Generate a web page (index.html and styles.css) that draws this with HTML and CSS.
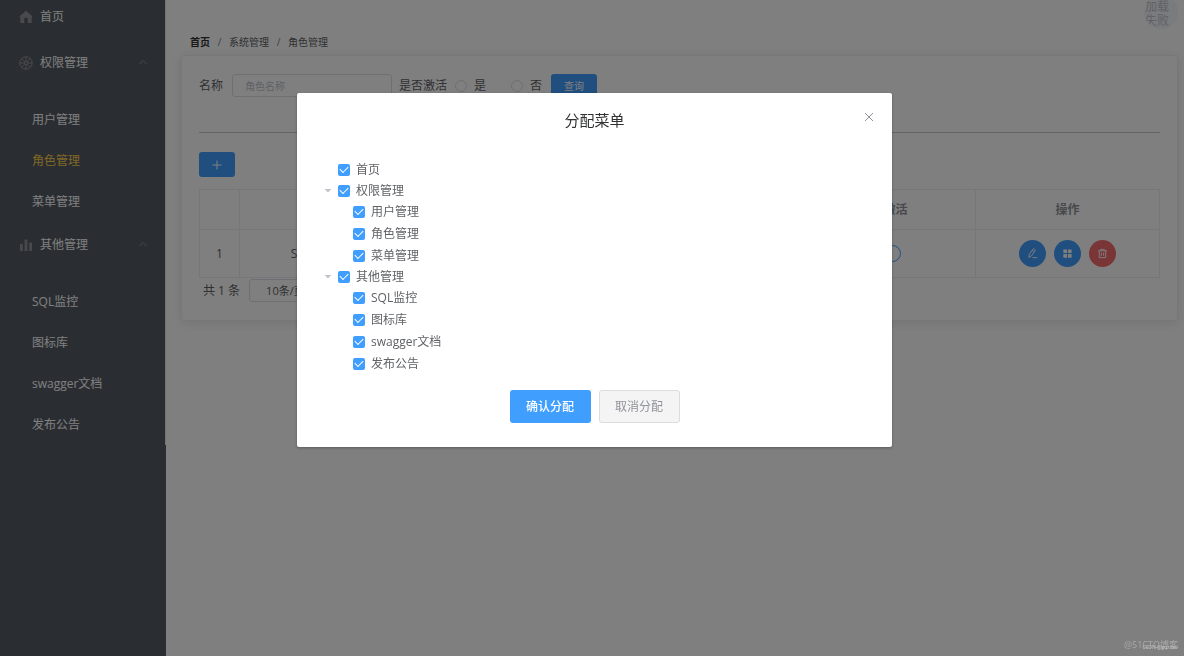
FILE: index.html
```html
<!DOCTYPE html>
<html lang="zh-CN">
<head>
<meta charset="utf-8">
<title>角色管理</title>
<link rel="stylesheet" href="styles.css">
</head>
<body>
<div class="app">
  <aside class="sidebar">
    <nav class="menu">
      <a class="menu-home" href="#">
        <svg class="menu-icon" viewBox="0 0 14 14"><path fill="currentColor" d="M7 .8 13.6 6.6 12.7 7.4V13H8.8V9.2a1.8 1.8 0 0 0-3.6 0V13H1.3V7.4L.4 6.6z"/></svg>
        首页
      </a>
      <button class="menu-title" type="button">
        <svg class="menu-icon" viewBox="0 0 14 14" fill="none" stroke="currentColor"><circle cx="7" cy="7" r="6.2"/><circle cx="7" cy="7" r="1.6"/><path d="M7 1v4.2M7 8.800V13M1 7h4.200M8.800 7H13M2.700 2.700l3 3M8.300 8.300l3 3M11.300 2.700l-3 3M5.700 8.300l-3 3"/></svg>
        <span class="menu-text">权限管理</span>
        <svg class="menu-arrow" viewBox="0 0 8 8" fill="none" stroke="currentColor"><path d="M.5 5 4 1.500 7.500 5"/></svg>
      </button>
      <ul class="submenu">
        <li><a class="submenu-item" href="#">用户管理</a></li>
        <li><a class="submenu-item active" href="#">角色管理</a></li>
        <li><a class="submenu-item" href="#">菜单管理</a></li>
      </ul>
      <button class="menu-title" type="button">
        <svg class="menu-icon" viewBox="0 0 14 14" fill="currentColor"><path d="M1 6h2.800v7H1zM5.600 1.500h2.800V13H5.600zM10.200 4.500H13V13h-2.800z"/></svg>
        <span class="menu-text">其他管理</span>
        <svg class="menu-arrow" viewBox="0 0 8 8" fill="none" stroke="currentColor"><path d="M.5 5 4 1.500 7.500 5"/></svg>
      </button>
      <ul class="submenu">
        <li><a class="submenu-item" href="#">SQL监控</a></li>
        <li><a class="submenu-item" href="#">图标库</a></li>
        <li><a class="submenu-item" href="#">swagger文档</a></li>
        <li><a class="submenu-item" href="#">发布公告</a></li>
      </ul>
    </nav>
  </aside>

  <main class="main">
    <header class="topbar"><span class="avatar">加载失败</span></header>
    <nav class="breadcrumb">
      <a class="crumb-home" href="#">首页</a><span class="slash">/</span><span>系统管理</span><span class="slash">/</span><span>角色管理</span>
    </nav>
    <section class="card">
      <form class="filters">
        <label class="name-label" for="name">名称</label>
        <input class="text-input" id="name" type="text" placeholder="角色名称">
        <span class="active-label">是否激活</span>
        <label class="radio"><input type="radio" name="active">是</label>
        <label class="radio radio-no"><input type="radio" name="active">否</label>
        <button class="query" type="button">查询</button>
      </form>
      <hr class="rule">
      <button class="add" type="button" aria-label="新增">
        <svg class="add-icon" viewBox="0 0 10 10" stroke="currentColor"><path d="M5 .5v9M.5 5h9"/></svg>
      </button>
      <table class="roles">
        <colgroup><col class="col-index"><col><col><col><col><col></colgroup>
        <thead>
          <tr><th></th><th>角色名称</th><th>角色描述</th><th>创建时间</th><th>是否激活</th><th>操作</th></tr>
        </thead>
        <tbody>
          <tr>
            <td>1</td><td>SUPER_ADMIN</td><td>超级管理员</td><td></td>
            <td><input class="switch" type="checkbox" aria-label="是否激活"></td>
            <td>
              <div class="actions">
                <button class="round" type="button" aria-label="编辑"><svg viewBox="0 0 12 12" fill="none" stroke="currentColor"><path d="M2 10.200 2.500 7 6.400 1.400a1 1 0 0 1 1.400-.2l.7.5a1 1 0 0 1 .2 1.400L4.800 8.700zM5.700 2.500l2 1.500M6 10.500h5"/></svg></button>
                <button class="round" type="button" aria-label="分配菜单"><svg viewBox="0 0 12 12" fill="currentColor"><path d="M1.500 1.500h4v4h-4zM6.500 1.500h4v4h-4zM1.500 6.500h4v4h-4zM6.500 6.500h4v4h-4z"/></svg></button>
                <button class="round danger" type="button" aria-label="删除"><svg viewBox="0 0 12 12" fill="none" stroke="currentColor"><path d="M1 3h10M4 3V1.500h4V3M2.500 3v7.500h7V3M4.800 5v3.500M7.200 5v3.500"/></svg></button>
              </div>
            </td>
          </tr>
        </tbody>
      </table>
      <div class="pagination">
        <span>共 1 条</span>
        <select class="page-size" aria-label="每页条数"><option>10条/页</option><option>20条/页</option></select>
      </div>
    </section>
  </main>
</div>

<div class="overlay">
  <section class="dialog" role="dialog" aria-modal="true" aria-labelledby="dialog-title">
    <header class="dialog-header">
      <h2 class="dialog-title" id="dialog-title">分配菜单</h2>
      <button class="close" type="button" aria-label="关闭"><svg viewBox="0 0 10 10" stroke="currentColor"><path d="M1 1l8 8M9 1 1 9"/></svg></button>
    </header>
    <ul class="tree">
      <li><div class="node"><span class="caret"></span><label class="check"><input type="checkbox" checked>首页</label></div></li>
      <li>
        <div class="node"><span class="caret open"></span><label class="check"><input type="checkbox" checked>权限管理</label></div>
        <ul class="branch">
          <li class="node"><span class="caret"></span><label class="check"><input type="checkbox" checked>用户管理</label></li>
          <li class="node"><span class="caret"></span><label class="check"><input type="checkbox" checked>角色管理</label></li>
          <li class="node"><span class="caret"></span><label class="check"><input type="checkbox" checked>菜单管理</label></li>
        </ul>
      </li>
      <li>
        <div class="node"><span class="caret open"></span><label class="check"><input type="checkbox" checked>其他管理</label></div>
        <ul class="branch">
          <li class="node"><span class="caret"></span><label class="check"><input type="checkbox" checked>SQL监控</label></li>
          <li class="node"><span class="caret"></span><label class="check"><input type="checkbox" checked>图标库</label></li>
          <li class="node"><span class="caret"></span><label class="check"><input type="checkbox" checked>swagger文档</label></li>
          <li class="node"><span class="caret"></span><label class="check"><input type="checkbox" checked>发布公告</label></li>
        </ul>
      </li>
    </ul>
    <footer class="dialog-footer">
      <button class="confirm" type="button">确认分配</button>
      <button class="cancel" type="button">取消分配</button>
    </footer>
  </section>
</div>
<div class="watermark">@51CTO博客<span class="watermark-small">CSDN @gqzdev</span></div>
</body>
</html>
```
FILE: styles.css
```css
* { box-sizing: border-box; }

body {
  margin: 0;
  background: #fff;
  color: #606266;
  font: 12px/20px "Open Sans", "Noto Sans CJK SC", sans-serif;
}

button, input, select { font: inherit; color: inherit; margin: 0; }
button { border: 0; padding: 0; background: none; }
a { color: inherit; text-decoration: none; }
ul { list-style: none; margin: 0; padding: 0; }

.app { display: flex; min-height: 100vh; }

/* sidebar */
.sidebar { width: 166px; flex: none; background: #545c64; color: #fff; }
.menu { border-right: 1px solid #e6e6e6; }
.menu-home, .menu-title {
  display: flex;
  align-items: center;
  gap: 7px;
  width: 100%;
  padding: 0 18px 0 19px;
  text-align: left;
}
.menu-home { height: 40px; padding-bottom: 6px; }
.menu-title { height: 46px; }
.menu-icon { width: 14px; height: 14px; color: #909399; }
.menu-text { flex: 1; }
.menu-arrow { width: 8px; height: 8px; color: #909399; }
.submenu { padding-top: 13px; }
.submenu-item { display: block; padding-left: 32px; line-height: 41px; }
.submenu-item.active { color: #ffd04b; }

/* main column */
.main { flex: 1; min-width: 0; padding: 0 6px 0 15px; }
.topbar { display: flex; justify-content: flex-end; height: 32px; }
.avatar {
  width: 34px;
  height: 34px;
  margin-top: -5px;
  padding: 5px 8px 0 1px;
  border-radius: 50%;
  overflow: hidden;
  background: #f5f7fa;
  color: #c0c4cc;
  line-height: 14px;
}
.breadcrumb { display: flex; padding-left: 9px; font-size: 10px; line-height: 20px; }
.crumb-home { color: #303133; font-weight: 700; }
.slash { width: 19px; color: #808389; text-align: center; }

.card {
  margin-top: 3px;
  padding: 18px 17px 18px;
  border: 1px solid #ebeef5;
  border-radius: 3px;
  box-shadow: 0 2px 12px rgba(0, 0, 0, .1);
}
.filters { display: flex; align-items: center; height: 23px; }
.text-input {
  width: 160px;
  height: 23px;
  margin: 0 7px 0 9px;
  padding: 0 12px;
  border: 1px solid #dcdfe6;
  border-radius: 3px;
  background: #fff;
  font-size: 10px;
}
.text-input::placeholder { color: #c0c4cc; }
.radio { display: flex; align-items: center; gap: 7px; margin-left: 8px; }
.radio-no { margin-left: 25px; }
.radio input {
  appearance: none;
  width: 12px;
  height: 12px;
  border: 1px solid #dcdfe6;
  border-radius: 50%;
}
.query {
  width: 46px;
  height: 23px;
  margin-left: 9px;
  border-radius: 3px;
  background: #409eff;
  color: #fff;
  font-size: 10px;
}
.rule { margin: 35px 0 19px; border: 0; border-top: 1px solid #c8c8c8; }
.add {
  display: grid;
  place-items: center;
  width: 36px;
  height: 25px;
  border-radius: 3px;
  background: #409eff;
  color: #fff;
}
.add-icon { width: 10px; height: 10px; }

.roles {
  width: 100%;
  margin-top: 12px;
  border-collapse: collapse;
  table-layout: fixed;
  text-align: center;
}
.roles th, .roles td { padding: 0; border: 1px solid #ebeef5; }
.roles th { height: 40px; color: #909399; font-weight: 700; }
.roles td { height: 48px; }
.col-index { width: 40px; }
.switch {
  appearance: none;
  display: block;
  width: 34px;
  height: 17px;
  margin: 0 auto;
  border: 1px solid #409eff;
  border-radius: 9px;
  background: #fff;
}
.actions { display: flex; justify-content: center; gap: 8px; }
.round {
  display: grid;
  place-items: center;
  width: 27px;
  height: 27px;
  border-radius: 50%;
  background: #409eff;
  color: #fff;
}
.round.danger { background: #f56c6c; }
.round svg { width: 11px; height: 11px; }

.pagination { display: flex; align-items: center; gap: 9px; padding: 1px 4px 0; }
.page-size {
  appearance: none;
  width: 84px;
  height: 23px;
  padding: 0 16px;
  border: 1px solid #dcdfe6;
  border-radius: 3px;
  background: #fff;
  font-size: 11px;
}

/* dialog */
.overlay {
  position: fixed;
  inset: 0;
  display: flex;
  align-items: flex-start;
  justify-content: center;
  padding: 93px 0 0 5px;
  background: rgba(0, 0, 0, .5);
}
.dialog {
  width: 595px;
  padding: 16px 16px 24px;
  border-radius: 2px;
  background: #fff;
  box-shadow: 0 1px 3px rgba(0, 0, 0, .3);
}
.dialog-header {
  display: grid;
  grid-template-columns: 14px 1fr 14px;
  align-items: start;
}
.dialog-title {
  grid-column: 2;
  margin: 0;
  color: #303133;
  font-size: 15px;
  font-weight: 400;
  line-height: 22px;
  text-align: center;
}
.close { display: grid; place-items: center; height: 16px; color: #909399; }
.close svg { width: 10px; height: 10px; }

.tree { padding: 28px 10px 0; }
.branch { display: grid; gap: 1px; padding-left: 15px; }
.node { display: flex; align-items: center; gap: 6px; height: 21px; }
.caret { width: 9px; height: 4px; }
.caret.open { background: #c0c4cc; clip-path: polygon(10% 0, 100% 0, 55% 100%); }
.check { display: flex; align-items: center; gap: 6px; }
.check input {
  appearance: none;
  display: grid;
  place-items: center;
  width: 12px;
  height: 12px;
  border-radius: 2px;
  background: #409eff;
}
.check input::before {
  content: "";
  width: 7px;
  height: 4px;
  margin-bottom: 2px;
  border: solid #fff;
  border-width: 0 0 1px 1px;
  transform: rotate(-45deg);
}

.dialog-footer { display: flex; justify-content: center; gap: 8px; padding-top: 16px; }
.confirm, .cancel { width: 81px; height: 33px; border-radius: 3px; }
.confirm { background: #409eff; color: #fff; font-weight: 500; }
.cancel { border: 1px solid #dcdcde; background: #f4f4f5; color: #909399; }

.watermark {
  position: fixed;
  right: 6px;
  bottom: 4px;
  color: #a8a8a8;
  font-size: 9px;
  line-height: 14px;
}
.watermark-small {
  position: absolute;
  right: 0;
  bottom: 0;
  color: #c8c8c8;
  font-size: 5px;
  line-height: 10px;
}
```
